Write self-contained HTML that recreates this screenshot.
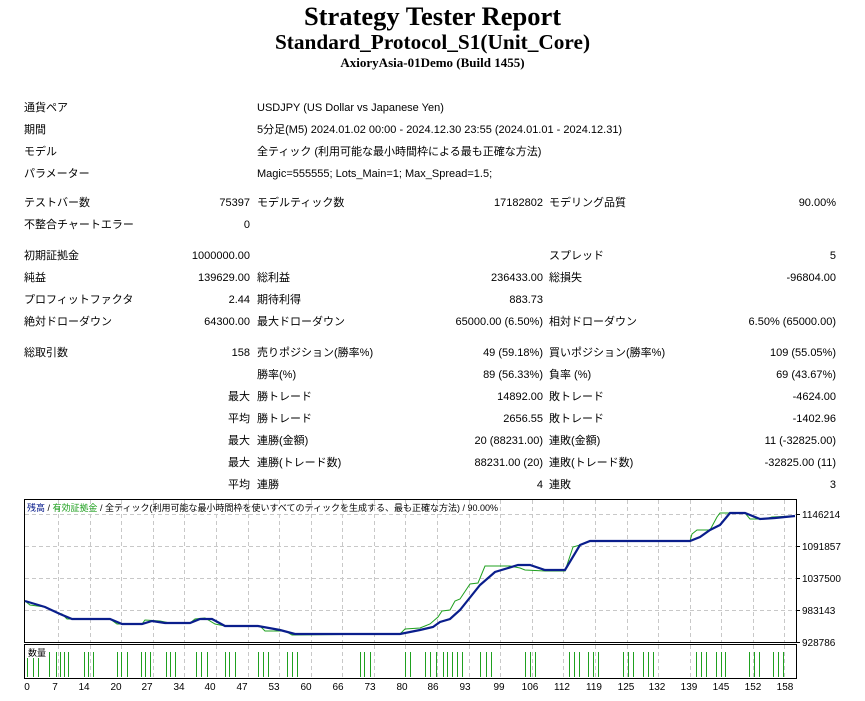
<!DOCTYPE html>
<html><head><meta charset="utf-8"><style>
body{margin:0;width:865px;height:701px;background:#fff;position:relative;font-family:"Liberation Sans","Noto Sans CJK JP",sans-serif;font-size:11px;color:#000;overflow:hidden}
.t{position:absolute;white-space:nowrap;line-height:13px;margin-top:1px}
.r{text-align:right}
h1,h2,h3{position:absolute;left:0;width:865px;text-align:center;margin:0;font-family:"Liberation Serif",serif;font-weight:bold}
</style></head><body>
<h1 style="top:1px;font-size:26.5px;line-height:30px">Strategy Tester Report</h1>
<h2 style="top:31px;font-size:21.3px;line-height:23px">Standard_Protocol_S1(Unit_Core)</h2>
<h3 style="top:55px;font-size:13px;line-height:15px">AxioryAsia-01Demo (Build 1455)</h3>

<div class="t" style="left:24px;top:101px">通貨ペア</div><div class="t" style="left:257px;top:101px">USDJPY (US Dollar vs Japanese Yen)</div>
<div class="t" style="left:24px;top:123px">期間</div><div class="t" style="left:257px;top:123px">5分足(M5) 2024.01.02 00:00 - 2024.12.30 23:55 (2024.01.01 - 2024.12.31)</div>
<div class="t" style="left:24px;top:145px">モデル</div><div class="t" style="left:257px;top:145px">全ティック (利用可能な最小時間枠による最も正確な方法)</div>
<div class="t" style="left:24px;top:167px">パラメーター</div><div class="t" style="left:257px;top:167px">Magic=555555; Lots_Main=1; Max_Spread=1.5;</div>

<div class="t" style="left:24px;top:196px">テストバー数</div><div class="t r" style="right:615px;top:196px">75397</div>
<div class="t" style="left:257px;top:196px">モデルティック数</div><div class="t r" style="right:322px;top:196px">17182802</div>
<div class="t" style="left:549px;top:196px">モデリング品質</div><div class="t r" style="right:29px;top:196px">90.00%</div>
<div class="t" style="left:24px;top:218px">不整合チャートエラー</div><div class="t r" style="right:615px;top:218px">0</div>

<div class="t" style="left:24px;top:249px">初期証拠金</div><div class="t r" style="right:615px;top:249px">1000000.00</div>
<div class="t" style="left:549px;top:249px">スプレッド</div><div class="t r" style="right:29px;top:249px">5</div>
<div class="t" style="left:24px;top:271px">純益</div><div class="t r" style="right:615px;top:271px">139629.00</div>
<div class="t" style="left:257px;top:271px">総利益</div><div class="t r" style="right:322px;top:271px">236433.00</div>
<div class="t" style="left:549px;top:271px">総損失</div><div class="t r" style="right:29px;top:271px">-96804.00</div>
<div class="t" style="left:24px;top:293px">プロフィットファクタ</div><div class="t r" style="right:615px;top:293px">2.44</div>
<div class="t" style="left:257px;top:293px">期待利得</div><div class="t r" style="right:322px;top:293px">883.73</div>
<div class="t" style="left:24px;top:315px">絶対ドローダウン</div><div class="t r" style="right:615px;top:315px">64300.00</div>
<div class="t" style="left:257px;top:315px">最大ドローダウン</div><div class="t r" style="right:322px;top:315px">65000.00 (6.50%)</div>
<div class="t" style="left:549px;top:315px">相対ドローダウン</div><div class="t r" style="right:29px;top:315px">6.50% (65000.00)</div>

<div class="t" style="left:24px;top:346px">総取引数</div><div class="t r" style="right:615px;top:346px">158</div>
<div class="t" style="left:257px;top:346px">売りポジション(勝率%)</div><div class="t r" style="right:322px;top:346px">49 (59.18%)</div>
<div class="t" style="left:549px;top:346px">買いポジション(勝率%)</div><div class="t r" style="right:29px;top:346px">109 (55.05%)</div>
<div class="t" style="left:257px;top:368px">勝率(%)</div><div class="t r" style="right:322px;top:368px">89 (56.33%)</div>
<div class="t" style="left:549px;top:368px">負率 (%)</div><div class="t r" style="right:29px;top:368px">69 (43.67%)</div>
<div class="t r" style="right:615px;top:390px">最大</div><div class="t" style="left:257px;top:390px">勝トレード</div><div class="t r" style="right:322px;top:390px">14892.00</div>
<div class="t" style="left:549px;top:390px">敗トレード</div><div class="t r" style="right:29px;top:390px">-4624.00</div>
<div class="t r" style="right:615px;top:412px">平均</div><div class="t" style="left:257px;top:412px">勝トレード</div><div class="t r" style="right:322px;top:412px">2656.55</div>
<div class="t" style="left:549px;top:412px">敗トレード</div><div class="t r" style="right:29px;top:412px">-1402.96</div>
<div class="t r" style="right:615px;top:434px">最大</div><div class="t" style="left:257px;top:434px">連勝(金額)</div><div class="t r" style="right:322px;top:434px">20 (88231.00)</div>
<div class="t" style="left:549px;top:434px">連敗(金額)</div><div class="t r" style="right:29px;top:434px">11 (-32825.00)</div>
<div class="t r" style="right:615px;top:456px">最大</div><div class="t" style="left:257px;top:456px">連勝(トレード数)</div><div class="t r" style="right:322px;top:456px">88231.00 (20)</div>
<div class="t" style="left:549px;top:456px">連敗(トレード数)</div><div class="t r" style="right:29px;top:456px">-32825.00 (11)</div>
<div class="t r" style="right:615px;top:478px">平均</div><div class="t" style="left:257px;top:478px">連勝</div><div class="t r" style="right:322px;top:478px">4</div>
<div class="t" style="left:549px;top:478px">連敗</div><div class="t r" style="right:29px;top:478px">3</div>

<svg style="position:absolute;left:0;top:0" width="865" height="701" font-family="Liberation Sans, Noto Sans CJK JP, sans-serif" font-size="10">
<g stroke="#c8c8c8" stroke-dasharray="4,3" stroke-width="1">
<path d="M25 514.5H796M25 546.5H796M25 578.5H796M25 610.5H796"/>
<path d="M58.5 500V642M90.5 500V642M121.5 500V642M153.5 500V642M184.5 500V642M216.5 500V642M248.5 500V642M279.5 500V642M311.5 500V642M342.5 500V642M374.5 500V642M405.5 500V642M437.5 500V642M469.5 500V642M500.5 500V642M532.5 500V642M563.5 500V642M595.5 500V642M627.5 500V642M658.5 500V642M690.5 500V642M721.5 500V642M753.5 500V642M784.5 500V642"/>
<path d="M58.5 645V678M90.5 645V678M121.5 645V678M153.5 645V678M184.5 645V678M216.5 645V678M248.5 645V678M279.5 645V678M311.5 645V678M342.5 645V678M374.5 645V678M405.5 645V678M437.5 645V678M469.5 645V678M500.5 645V678M532.5 645V678M563.5 645V678M595.5 645V678M627.5 645V678M658.5 645V678M690.5 645V678M721.5 645V678M753.5 645V678M784.5 645V678"/>
</g>
<rect x="24.5" y="499.5" width="772" height="143" fill="none" stroke="#000"/>
<rect x="24.5" y="644.5" width="772" height="34" fill="none" stroke="#000"/>
<path d="M797 514.5h3M797 546.5h3M797 578.5h3M797 610.5h3M797 642.5h3" stroke="#000"/>
<polyline fill="none" stroke="#1fa01f" stroke-width="1" points="25,601 30,605 45,607 55,612 62,614 67,619 110,619 117,624 142,624 145,620 160,621 170,623 190,623 195,619 205,618 215,624 225,626 260,626 265,631 285,631 292,635 400,634 405,629 420,628 430,624 438,617 442,611 450,610 455,601 460,599 470,584 478,583 485,566 510,566 520,568 525,570 545,571 565,571 568,562 573,547 580,545 590,541 690,541 692,534 697,530 710,530 717,517 720,513 745,513 750,519 765,519 772,517 793,516"/>
<polyline fill="none" stroke="#0a1e8c" stroke-width="2.2" points="25,601 35,604 45,607 60,614 72,619 110,619 122,624 142,624 152,621 165,623 190,623 200,619 212,619 225,626 258,626 280,630 295,634 400,634 420,630 433,627 440,622 450,619 460,610 480,585 495,572 518,565 530,565 545,570 565,570 580,545 590,541 690,541 700,537 710,530 720,525 730,513 745,513 760,519 775,518 795,516"/>
<path stroke="#1fa01f" stroke-width="1" d="M27.5 654V677M33.5 654V677M38.5 654V677M49.5 652V677M56.5 652V677M60.5 652V677M64.5 652V677M68.5 652V677M84.5 652V677M88.5 652V677M93.5 652V677M117.5 652V677M121.5 652V677M127.5 652V677M141.5 652V677M145.5 652V677M150.5 652V677M166.5 652V677M170.5 652V677M175.5 652V677M196.5 652V677M201.5 652V677M207.5 652V677M225.5 652V677M229.5 652V677M235.5 652V677M258.5 652V677M263.5 652V677M268.5 652V677M287.5 652V677M292.5 652V677M297.5 652V677M360.5 652V677M364.5 652V677M370.5 652V677M405.5 652V677M410.5 652V677M425.5 652V677M430.5 652V677M436.5 652V677M443.5 652V677M447.5 652V677M452.5 652V677M457.5 652V677M462.5 652V677M480.5 652V677M486.5 652V677M491.5 652V677M525.5 652V677M530.5 652V677M535.5 652V677M569.5 652V677M574.5 652V677M579.5 652V677M588.5 652V677M593.5 652V677M598.5 652V677M623.5 652V677M628.5 652V677M633.5 652V677M643.5 652V677M648.5 652V677M653.5 652V677M696.5 652V677M701.5 652V677M706.5 652V677M716.5 652V677M721.5 652V677M725.5 652V677M749.5 652V677M754.5 652V677M759.5 652V677M773.5 652V677M778.5 652V677M783.5 652V677"/>
<rect x="27" y="646" width="20" height="12" fill="#fff"/>
<text x="28" y="656" font-size="9">数量</text>
<text x="27" y="511" font-size="9"><tspan fill="#0a1e8c">残高</tspan> / <tspan fill="#1fa01f">有効証拠金</tspan> / 全ティック(利用可能な最小時間枠を使いすべてのティックを生成する、最も正確な方法) / 90.00%</text>
<g font-size="10"><text x="802" y="518">1146214</text><text x="802" y="550">1091857</text><text x="802" y="582">1037500</text><text x="802" y="614">983143</text><text x="802" y="646">928786</text></g>
<g font-size="10" text-anchor="middle"><text x="27" y="690">0</text><text x="55" y="690">7</text><text x="84" y="690">14</text><text x="116" y="690">20</text><text x="147" y="690">27</text><text x="179" y="690">34</text><text x="210" y="690">40</text><text x="242" y="690">47</text><text x="274" y="690">53</text><text x="306" y="690">60</text><text x="338" y="690">66</text><text x="370" y="690">73</text><text x="402" y="690">80</text><text x="433" y="690">86</text><text x="465" y="690">93</text><text x="499" y="690">99</text><text x="530" y="690">106</text><text x="562" y="690">112</text><text x="594" y="690">119</text><text x="626" y="690">125</text><text x="657" y="690">132</text><text x="689" y="690">139</text><text x="721" y="690">145</text><text x="753" y="690">152</text><text x="785" y="690">158</text></g>
</svg>
</body></html>
